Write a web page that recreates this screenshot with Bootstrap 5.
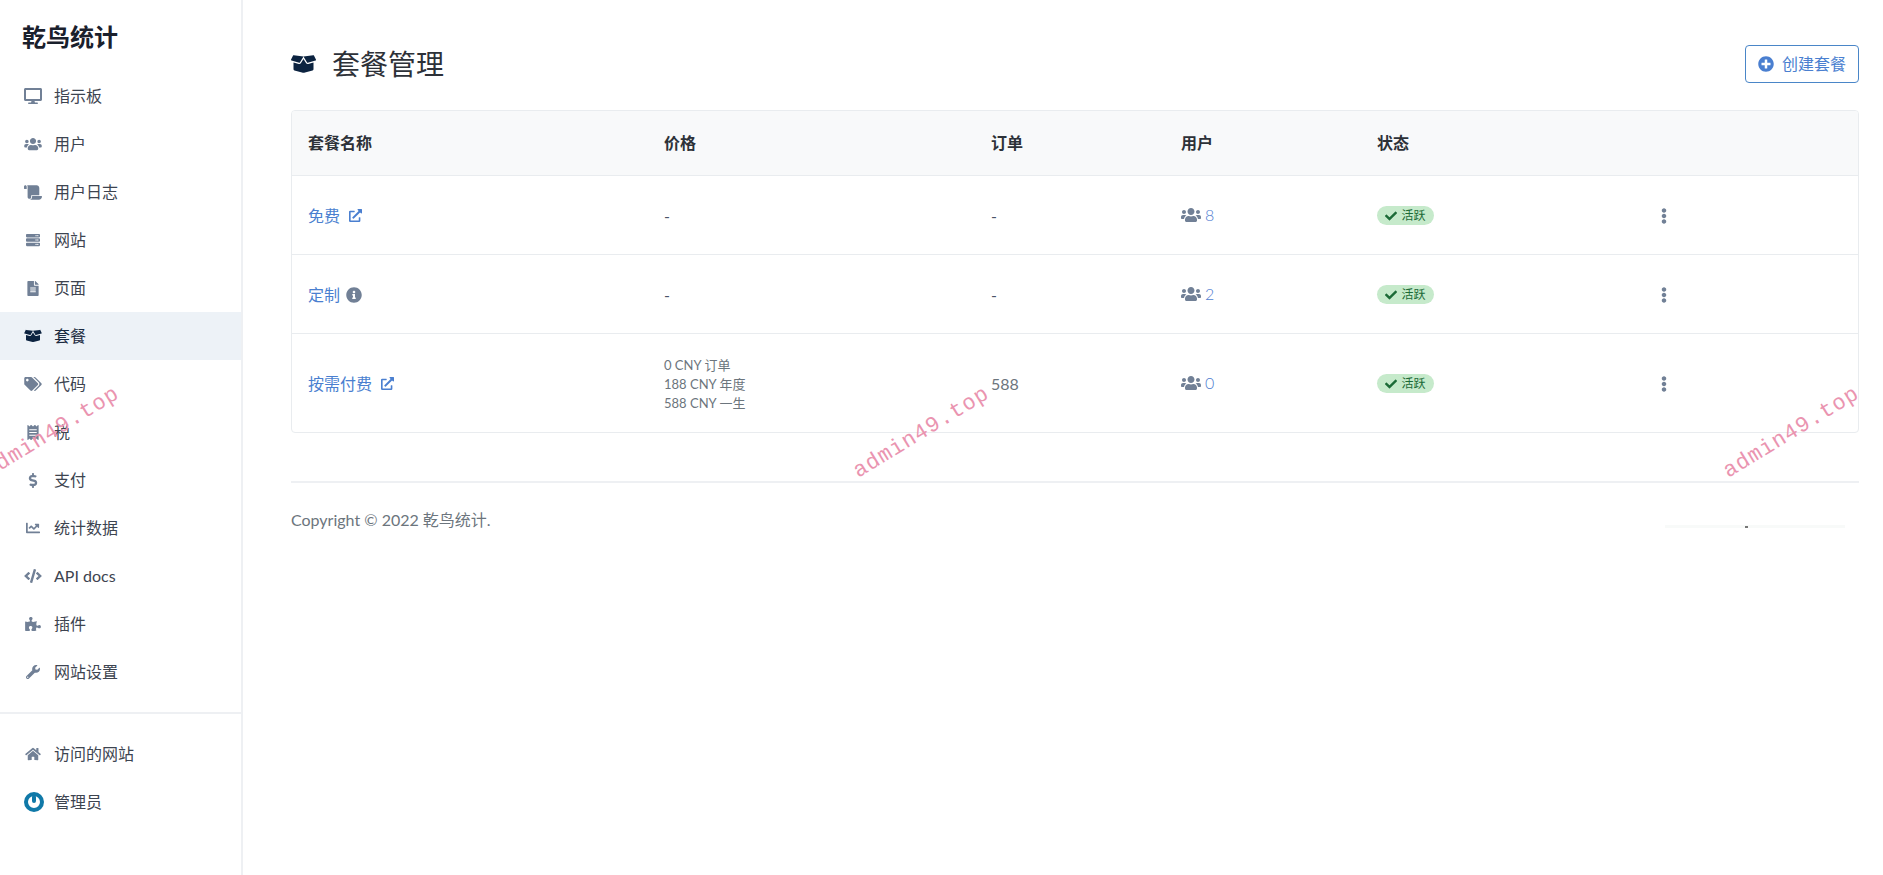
<!DOCTYPE html>
<html lang="zh-CN">
<head>
  <meta charset="UTF-8">
  <meta name="viewport" content="width=device-width, initial-scale=1">
  <title>套餐管理</title>
  <link href="https://cdn.jsdelivr.net/npm/bootstrap@5.3.3/dist/css/bootstrap.min.css" rel="stylesheet">
  <style>
    body {
      font-family: "Lato", "Noto Sans CJK SC", sans-serif;
      font-size: 16px;
      color: #212529;
      background: #fff;
      overflow-x: hidden;
    }
    .ico { fill: currentColor; display: block; flex: none; }
    .side-bar {
      width: 243px;
      flex: none;
      border-right: 2px solid #eef0f3;
    }
    .brand-name {
      height: 72px;
      padding: 19px 22px 0;
      font-size: 24px;
      line-height: 36px;
      font-weight: 700;
      color: #1a202c;
    }
    .side-link {
      height: 48px;
      padding: 0 0 0 24px;
      color: #3d4450;
    }
    .side-link:hover { color: #3d4450; }
    .side-link .ico-box {
      width: 30px;
      flex: none;
      color: #718096;
    }
    .side-link.on { background: #edf2f7; color: #1a2a40; }
    .side-link.on .ico-box { color: #0c2340; }
    .side-line { height: 2px; background: #eef0f3; margin: 16px 0 16px; }
    .avatar-ring {
      width: 20px;
      height: 20px;
      border-radius: 50%;
      border: 4px solid #1079a8;
      position: relative;
    }
    .avatar-ring::after {
      content: "";
      position: absolute;
      left: 4px;
      top: -1px;
      width: 4px;
      height: 8px;
      border-radius: 2px;
      background: #1079a8;
    }
    .main-area { padding: 45px 24px 0 48px; min-width: 0; }
    .page-head { height: 38px; margin-bottom: 27px; }
    .page-title { font-size: 28px; font-weight: 400; margin: 0; color: #2d3138; line-height: 38px; }
    .title-ico { color: #0c2340; }
    .add-btn {
      height: 38px;
      width: 114px;
      padding: 0;
      border-color: #4a86c8;
      color: #4a7fd0;
      background: #fff;
      border-radius: 4px;
    }
    .plan-box {
      border: 1px solid #e9ecef;
      border-radius: 4px;
      overflow: hidden;
    }
    .plan-table { table-layout: fixed; margin: 0; width: 100%; }
    .plan-table th {
      height: 64px;
      vertical-align: middle;
      background: #f8f9fa;
      font-weight: 700;
      color: #2d3138;
      padding: 0 16px;
      border-bottom: 1px solid #e9ecef;
    }
    .plan-table td {
      height: 79px;
      vertical-align: middle;
      padding: 2px 16px 0;
      color: #4a5568;
      border-bottom: 1px solid #e9ecef;
    }
    .plan-table tr:last-child td { height: 99px; border-bottom: 0; }
    .plan-table th:nth-child(1) { width: 356px; }
    .plan-table th:nth-child(2) { width: 327px; }
    .plan-table th:nth-child(3) { width: 190px; }
    .plan-table th:nth-child(4) { width: 196px; }
    .plan-table th:nth-child(5) { width: 284px; }
    .plan-link { color: #4a7fd0; text-decoration: none; }
    .link-gap { gap: 9px; }
    .info-gap { gap: 6px; }
    .price-lines { font-size: 13px; line-height: 19px; color: #6c757d; padding-top: 2px; }
    .plan-table td.order-num { color: #6c757d; }
    .gray-ico { color: #718096; }
    .count-num { color: #4f7dd0; font-weight: 300; }
    .state-pill {
      background: #c6eacb;
      color: #1c6b37;
      font-size: 12px;
      font-weight: 400;
      height: 19px;
      width: 57px;
      padding: 0;
      line-height: 19px;
      margin-top: 2px;
    }
    .dots-ico { color: #718096; }
    .foot-line { height: 2px; background: #eef0f3; margin: 48px 0 25px; }
    .foot-text { color: #6c757d; line-height: 24px; }
    .stamp {
      position: absolute;
      top: 460px;
      font-family: "Liberation Mono", monospace;
      font-size: 22px;
      line-height: 24px;
      letter-spacing: 0.9px;
      color: #ea94b0;
      white-space: nowrap;
      transform-origin: left bottom;
      transform: rotate(-31.5deg);
      pointer-events: none;
    }
    .stamp-a { left: -8px; }
    .stamp-b { left: 862px; }
    .stamp-c { left: 1732px; }
    .scan-bit {
      position: absolute;
      left: 1665px;
      top: 525px;
      width: 180px;
      height: 3px;
      background: #f8faf9;
    }
    .scan-bit::after {
      content: "";
      position: absolute;
      left: 80px;
      top: 1px;
      width: 3px;
      height: 2px;
      background: #777;
    }
  </style>
</head>
<body>

<svg width="0" height="0" class="position-absolute">
  <symbol id="i-desktop" viewBox="0 0 576 512"><path d="M528 0H48C21.5 0 0 21.5 0 48v320c0 26.5 21.5 48 48 48h192l-16 48h-72c-13.3 0-24 10.7-24 24s10.7 24 24 24h272c13.3 0 24-10.7 24-24s-10.7-24-24-24h-72l-16-48h192c26.5 0 48-21.5 48-48V48c0-26.5-21.5-48-48-48zm-16 352H64V64h448v288z"/></symbol>
  <symbol id="i-users" viewBox="0 0 640 512"><path d="M96 224c35.3 0 64-28.7 64-64s-28.7-64-64-64-64 28.7-64 64 28.7 64 64 64zm448 0c35.3 0 64-28.7 64-64s-28.7-64-64-64-64 28.7-64 64 28.7 64 64 64zm32 32h-64c-17.6 0-33.5 7.1-45.1 18.6 40.3 22.1 68.9 62 75.1 109.4h66c17.7 0 32-14.3 32-32v-32c0-35.3-28.7-64-64-64zm-256 0c61.9 0 112-50.1 112-112S381.9 32 320 32 208 82.1 208 144s50.1 112 112 112zm76.8 32h-8.3c-20.8 10-43.9 16-68.5 16s-47.6-6-68.5-16h-8.3C179.6 288 128 339.6 128 403.2V432c0 26.5 21.5 48 48 48h288c26.5 0 48-21.5 48-48v-28.8c0-63.6-51.6-115.2-115.2-115.2zm-223.7-13.4C161.5 263.1 145.6 256 128 256H64c-35.3 0-64 28.7-64 64v32c0 17.7 14.3 32 32 32h65.9c6.3-47.4 34.9-87.3 75.2-109.4z"/></symbol>
  <symbol id="i-scroll" viewBox="0 0 640 512"><path d="M48 0C21.53 0 0 21.53 0 48v64c0 8.84 7.16 16 16 16h80V48C96 21.53 74.47 0 48 0zm208 412.57V352h288V96c0-52.94-43.06-96-96-96H111.59C121.74 13.41 128 29.92 128 48v368c0 38.87 34.66 69.65 74.77 63.12C234.28 474 256 444.46 256 412.57zM288 384v32c0 52.93-43.06 96-96 96h336c61.86 0 112-50.14 112-112 0-8.84-7.16-16-16-16H288z"/></symbol>
  <symbol id="i-server" viewBox="0 0 512 512"><path d="M480 160H32c-17.673 0-32-14.327-32-32V64c0-17.673 14.327-32 32-32h448c17.673 0 32 14.327 32 32v64c0 17.673-14.327 32-32 32zm-48-88c-13.255 0-24 10.745-24 24s10.745 24 24 24 24-10.745 24-24-10.745-24-24-24zm-64 0c-13.255 0-24 10.745-24 24s10.745 24 24 24 24-10.745 24-24-10.745-24-24-24zm112 248H32c-17.673 0-32-14.327-32-32v-64c0-17.673 14.327-32 32-32h448c17.673 0 32 14.327 32 32v64c0 17.673-14.327 32-32 32zm-48-88c-13.255 0-24 10.745-24 24s10.745 24 24 24 24-10.745 24-24-10.745-24-24-24zm-64 0c-13.255 0-24 10.745-24 24s10.745 24 24 24 24-10.745 24-24-10.745-24-24-24zm112 248H32c-17.673 0-32-14.327-32-32v-64c0-17.673 14.327-32 32-32h448c17.673 0 32 14.327 32 32v64c0 17.673-14.327 32-32 32zm-48-88c-13.255 0-24 10.745-24 24s10.745 24 24 24 24-10.745 24-24-10.745-24-24-24zm-64 0c-13.255 0-24 10.745-24 24s10.745 24 24 24 24-10.745 24-24-10.745-24-24-24z"/></symbol>
  <symbol id="i-file" viewBox="0 0 384 512"><path d="M224 136V0H24C10.7 0 0 10.7 0 24v464c0 13.3 10.7 24 24 24h336c13.3 0 24-10.7 24-24V160H248c-13.2 0-24-10.8-24-24zm64 236c0 6.6-5.4 12-12 12H108c-6.6 0-12-5.4-12-12v-8c0-6.6 5.4-12 12-12h168c6.6 0 12 5.4 12 12v8zm0-64c0 6.6-5.4 12-12 12H108c-6.6 0-12-5.4-12-12v-8c0-6.6 5.4-12 12-12h168c6.6 0 12 5.4 12 12v8zm0-72v8c0 6.6-5.4 12-12 12H108c-6.6 0-12-5.4-12-12v-8c0-6.6 5.4-12 12-12h168c6.6 0 12 5.4 12 12zm96-114.1v6.1H256V0h6.1c6.4 0 12.5 2.5 17 7l97.9 98c4.5 4.5 7 10.6 7 16.9z"/></symbol>
  <symbol id="i-box" viewBox="0 0 640 512"><path d="M425.7 256c-16.9 0-32.8-9-41.4-23.4L320 126l-64.2 106.6c-8.7 14.5-24.6 23.5-41.5 23.5-4.5 0-9-.6-13.3-1.9L64 215v178c0 14.7 10 27.5 24.2 31l216.2 54.1c10.2 2.5 20.9 2.5 31 0L551.8 424c14.2-3.6 24.2-16.4 24.2-31V215l-137 39.1c-4.3 1.3-8.8 1.9-13.3 1.9zm212.6-112.2L586.8 41c-3.1-6.2-9.8-9.8-16.7-8.9L320 64l91.7 152.1c3.8 6.3 11.4 9.3 18.5 7.3l197.9-56.5c9.9-2.9 14.7-13.9 10.2-23.1zM53.2 41L1.7 143.8c-4.6 9.2.3 20.2 10.1 23l197.9 56.5c7.1 2 14.7-1 18.5-7.3L320 64 69.8 32.1c-6.9-.8-13.5 2.7-16.6 8.9z"/></symbol>
  <symbol id="i-tags" viewBox="0 0 640 512"><path d="M497.941 225.941L286.059 14.059A48 48 0 0 0 252.118 0H48C21.49 0 0 21.49 0 48v204.118a48 48 0 0 0 14.059 33.941l211.882 211.882c18.744 18.745 49.136 18.746 67.882 0l204.118-204.118c18.745-18.745 18.745-49.137 0-67.882zM112 160c-26.51 0-48-21.49-48-48s21.49-48 48-48 48 21.49 48 48-21.49 48-48 48zm513.941 133.823L421.823 497.941c-18.745 18.745-49.137 18.745-67.882 0l-.36-.36L527.64 323.522c16.999-16.999 26.36-39.6 26.36-63.64s-9.362-46.641-26.36-63.64L331.397 0h48.721a48 48 0 0 1 33.941 14.059l211.882 211.882c18.745 18.745 18.745 49.137 0 67.882z"/></symbol>
  <symbol id="i-receipt" viewBox="0 0 384 512"><path d="M358.4 3.2L320 48 265.6 3.2a15.9 15.9 0 0 0-19.2 0L192 48 137.6 3.2a15.9 15.9 0 0 0-19.2 0L64 48 25.6 3.2C15-4.7 0 2.8 0 16v480c0 13.2 15 20.7 25.6 12.8L64 464l54.4 44.8a15.9 15.9 0 0 0 19.2 0L192 464l54.4 44.8a15.9 15.9 0 0 0 19.2 0L320 464l38.4 44.8c10.5 7.9 25.6.4 25.6-12.8V16c0-13.2-15-20.7-25.6-12.8zM320 360c0 4.4-3.6 8-8 8H72c-4.4 0-8-3.6-8-8v-16c0-4.4 3.6-8 8-8h240c4.4 0 8 3.6 8 8v16zm0-96c0 4.4-3.6 8-8 8H72c-4.4 0-8-3.6-8-8v-16c0-4.4 3.6-8 8-8h240c4.4 0 8 3.6 8 8v16zm0-96c0 4.4-3.6 8-8 8H72c-4.4 0-8-3.6-8-8v-16c0-4.4 3.6-8 8-8h240c4.4 0 8 3.6 8 8v16z"/></symbol>
  <symbol id="i-dollar" viewBox="0 0 288 512"><path d="M209.2 233.4l-108-31.6C88.7 198.2 80 186.5 80 173.5c0-16.3 13.2-29.5 29.5-29.5h66.3c12.2 0 24.2 3.7 34.2 10.5 6.1 4.1 14.3 3.1 19.5-2l34.8-34c7.1-6.9 6.1-18.4-1.8-24.5C238 74.8 207.4 64.1 176 64V16c0-8.8-7.2-16-16-16h-32c-8.8 0-16 7.2-16 16v48h-2.5C45.8 64-5.4 118.7.5 183.6c4.2 46.1 39.4 83.6 83.8 96.6l102.5 30c12.5 3.7 21.2 15.3 21.2 28.3 0 16.3-13.2 29.5-29.5 29.5h-66.3C100 368 88 364.3 78 357.5c-6.1-4.1-14.3-3.1-19.5 2l-34.8 34c-7.1 6.9-6.1 18.4 1.8 24.5 24.5 19.2 55.1 29.9 86.5 30v48c0 8.8 7.2 16 16 16h32c8.8 0 16-7.2 16-16v-48.2c46.6-.9 90.3-28.6 105.7-72.7 21.5-61.6-14.6-124.8-72.5-141.7z"/></symbol>
  <symbol id="i-chart" viewBox="0 0 512 512"><path d="M496 384H64V80c0-8.84-7.16-16-16-16H16C7.16 64 0 71.16 0 80v336c0 17.67 14.33 32 32 32h464c8.84 0 16-7.16 16-16v-32c0-8.84-7.16-16-16-16zM464 96H345.94c-21.38 0-32.09 25.85-16.97 40.97l32.4 32.4L288 242.75l-73.37-73.37c-12.5-12.5-32.76-12.5-45.25 0l-68.69 68.69c-6.25 6.25-6.25 16.38 0 22.63l22.62 22.62c6.25 6.25 16.38 6.25 22.63 0L192 237.25l73.37 73.37c12.5 12.5 32.76 12.5 45.25 0l96-96 32.4 32.4c15.12 15.12 40.97 4.41 40.97-16.97V112c.01-8.84-7.15-16-15.99-16z"/></symbol>
  <symbol id="i-code" viewBox="0 0 640 512"><path d="M278.9 511.5l-61-17.7c-6.4-1.8-10-8.5-8.2-14.9L346.2 8.7c1.8-6.4 8.5-10 14.9-8.2l61 17.7c6.4 1.8 10 8.5 8.2 14.9L293.8 503.3c-1.9 6.4-8.5 10.1-14.9 8.2zm-114-112.2l43.5-46.4c4.6-4.9 4.3-12.7-.8-17.2L117 256l90.6-79.7c5.1-4.5 5.5-12.3.8-17.2l-43.5-46.4c-4.5-4.8-12.1-5.1-17-.5L3.8 247.2c-5.1 4.7-5.1 12.8 0 17.5l144.1 135.1c4.9 4.6 12.5 4.4 17-.5zm327.2.6l144.1-135.1c5.1-4.7 5.1-12.8 0-17.5L492.1 112.1c-4.8-4.5-12.4-4.3-17 .5L431.6 159c-4.6 4.9-4.3 12.7.8 17.2L523 256l-90.6 79.7c-5.1 4.5-5.5 12.3-.8 17.2l43.5 46.4c4.5 4.9 12.1 5.1 17 .6z"/></symbol>
  <symbol id="i-puzzle" viewBox="0 0 576 512"><path d="M519.442 288.651c-41.519 0-59.5 31.593-82.058 31.593C377.409 320.244 432 144 432 144s-196.288 80-196.288-3.297c0-35.827 36.288-46.25 36.288-85.985C272 19.216 243.885 0 210.539 0c-34.654 0-66.366 18.891-66.366 56.346 0 41.364 31.711 59.277 31.711 81.75C175.885 207.719 0 166.758 0 166.758v333.237s178.635 41.047 178.635-28.662c0-22.473-40-40.107-40-81.471 0-37.456 29.25-56.346 63.577-56.346 33.673 0 61.788 19.216 61.788 54.717 0 39.735-36.288 50.158-36.288 85.985 0 60.803 129.675 25.73 181.23 25.73 0 0-34.725-120.101 25.827-120.101 35.962 0 46.423 36.152 86.308 36.152C556.712 416 576 387.99 576 354.443c0-34.199-18.962-65.792-56.558-65.792z"/></symbol>
  <symbol id="i-wrench" viewBox="0 0 512 512"><path d="M507.73 109.1c-2.24-9.03-13.54-12.09-20.12-5.51l-74.36 74.36-67.88-11.31-11.31-67.88 74.36-74.36c6.62-6.62 3.43-17.9-5.66-20.16-47.38-11.74-99.55.91-136.58 37.93-39.64 39.64-50.55 97.1-34.05 147.2L18.74 402.76c-24.99 24.99-24.99 65.51 0 90.5 24.99 24.99 65.51 24.99 90.5 0l213.21-213.21c50.12 16.71 107.47 5.68 147.37-34.22 37.07-37.07 49.7-89.32 37.91-136.73zM64 472c-13.25 0-24-10.75-24-24 0-13.26 10.75-24 24-24s24 10.74 24 24c0 13.25-10.75 24-24 24z"/></symbol>
  <symbol id="i-home" viewBox="0 0 576 512"><path d="M280.37 148.26L96 300.11V464a16 16 0 0 0 16 16l112.06-.29a16 16 0 0 0 15.92-16V368a16 16 0 0 1 16-16h64a16 16 0 0 1 16 16v95.64a16 16 0 0 0 16 16.05L464 480a16 16 0 0 0 16-16V300L295.67 148.26a12.19 12.19 0 0 0-15.3 0zM571.6 251.47L488 182.56V44.05a12 12 0 0 0-12-12h-56a12 12 0 0 0-12 12v72.61L318.47 43a48 48 0 0 0-61 0L4.34 251.47a12 12 0 0 0-1.6 16.9l25.5 31A12 12 0 0 0 45.15 301l235.22-193.74a12.19 12.19 0 0 1 15.3 0L530.9 301a12 12 0 0 0 16.9-1.6l25.5-31a12 12 0 0 0-1.7-16.93z"/></symbol>
  <symbol id="i-link" viewBox="0 0 512 512"><path d="M432,320H400a16,16,0,0,0-16,16V448H64V128H208a16,16,0,0,0,16-16V80a16,16,0,0,0-16-16H48A48,48,0,0,0,0,112V464a48,48,0,0,0,48,48H400a48,48,0,0,0,48-48V336A16,16,0,0,0,432,320ZM488,0h-128c-21.37,0-32.05,25.91-16.97,41l35.73,35.73L135,320.37a24,24,0,0,0,0,34L157.67,377a24,24,0,0,0,34,0L435.28,133.32,471,169c15,15,41,4.5,41-17V24A24,24,0,0,0,488,0Z"/></symbol>
  <symbol id="i-info" viewBox="0 0 512 512"><path d="M256 8C119.043 8 8 119.083 8 256c0 136.997 111.043 248 248 248s248-111.003 248-248C504 119.083 392.957 8 256 8zm0 110c23.196 0 42 18.804 42 42s-18.804 42-42 42-42-18.804-42-42 18.804-42 42-42zm56 254c0 6.627-5.373 12-12 12h-88c-6.627 0-12-5.373-12-12v-24c0-6.627 5.373-12 12-12h12v-64h-12c-6.627 0-12-5.373-12-12v-24c0-6.627 5.373-12 12-12h64c6.627 0 12 5.373 12 12v100h12c6.627 0 12 5.373 12 12v24z"/></symbol>
  <symbol id="i-plus" viewBox="0 0 512 512"><path d="M256 8C119 8 8 119 8 256s111 248 248 248 248-111 248-248S393 8 256 8zm144 276c0 6.6-5.4 12-12 12h-92v92c0 6.6-5.4 12-12 12h-56c-6.6 0-12-5.4-12-12v-92h-92c-6.6 0-12-5.4-12-12v-56c0-6.6 5.4-12 12-12h92v-92c0-6.6 5.4-12 12-12h56c6.6 0 12 5.4 12 12v92h92c6.6 0 12 5.4 12 12v56z"/></symbol>
  <symbol id="i-check" viewBox="0 0 512 512"><path d="M173.898 439.404l-166.4-166.4c-9.997-9.997-9.997-26.206 0-36.204l36.203-36.204c9.997-9.998 26.207-9.998 36.204 0L192 312.69 432.095 72.596c9.997-9.997 26.207-9.997 36.204 0l36.203 36.204c9.997 9.997 9.997 26.206 0 36.204l-294.4 294.401c-9.998 9.997-26.207 9.997-36.204-.001z"/></symbol>
  <symbol id="i-dots" viewBox="0 0 192 512"><path d="M96 184c39.8 0 72 32.2 72 72s-32.2 72-72 72-72-32.2-72-72 32.2-72 72-72zM24 80c0 39.8 32.2 72 72 72s72-32.2 72-72S135.8 8 96 8 24 40.2 24 80zm0 352c0 39.8 32.2 72 72 72s72-32.2 72-72-32.2-72-72-72-72 32.2-72 72z"/></symbol>
</svg>

<div class="d-flex min-vh-100">
  <!-- sidebar -->
  <aside class="side-bar">
    <div class="brand-name">乾鸟统计</div>
    <nav class="nav flex-column">
      <a class="nav-link side-link d-flex align-items-center" href="#"><span class="ico-box"><svg class="ico" width="18" height="16"><use href="#i-desktop"/></svg></span>指示板</a>
      <a class="nav-link side-link d-flex align-items-center" href="#"><span class="ico-box"><svg class="ico" width="18" height="14"><use href="#i-users"/></svg></span>用户</a>
      <a class="nav-link side-link d-flex align-items-center" href="#"><span class="ico-box"><svg class="ico" width="18" height="15"><use href="#i-scroll"/></svg></span>用户日志</a>
      <a class="nav-link side-link d-flex align-items-center" href="#"><span class="ico-box"><svg class="ico" width="18" height="14"><use href="#i-server"/></svg></span>网站</a>
      <a class="nav-link side-link d-flex align-items-center" href="#"><span class="ico-box"><svg class="ico" width="18" height="15"><use href="#i-file"/></svg></span>页面</a>
      <a class="nav-link side-link on d-flex align-items-center" href="#"><span class="ico-box"><svg class="ico" width="18" height="14"><use href="#i-box"/></svg></span>套餐</a>
      <a class="nav-link side-link d-flex align-items-center" href="#"><span class="ico-box"><svg class="ico" width="18" height="14"><use href="#i-tags"/></svg></span>代码</a>
      <a class="nav-link side-link d-flex align-items-center" href="#"><span class="ico-box"><svg class="ico" width="18" height="15"><use href="#i-receipt"/></svg></span>税</a>
      <a class="nav-link side-link d-flex align-items-center" href="#"><span class="ico-box"><svg class="ico" width="18" height="15"><use href="#i-dollar"/></svg></span>支付</a>
      <a class="nav-link side-link d-flex align-items-center" href="#"><span class="ico-box"><svg class="ico" width="18" height="14"><use href="#i-chart"/></svg></span>统计数据</a>
      <a class="nav-link side-link d-flex align-items-center" href="#"><span class="ico-box"><svg class="ico" width="18" height="14"><use href="#i-code"/></svg></span>API docs</a>
      <a class="nav-link side-link d-flex align-items-center" href="#"><span class="ico-box"><svg class="ico" width="18" height="14"><use href="#i-puzzle"/></svg></span>插件</a>
      <a class="nav-link side-link d-flex align-items-center" href="#"><span class="ico-box"><svg class="ico" width="18" height="14"><use href="#i-wrench"/></svg></span>网站设置</a>
    </nav>
    <div class="side-line"></div>
    <nav class="nav flex-column">
      <a class="nav-link side-link d-flex align-items-center" href="#"><span class="ico-box"><svg class="ico" width="18" height="14"><use href="#i-home"/></svg></span>访问的网站</a>
      <a class="nav-link side-link d-flex align-items-center" href="#"><span class="ico-box"><span class="avatar-ring d-block"></span></span>管理员</a>
    </nav>
  </aside>

  <!-- content -->
  <main class="main-area flex-grow-1">
    <div class="page-head d-flex justify-content-between align-items-center">
      <div class="d-flex align-items-center gap-3">
        <svg class="ico title-ico" width="25" height="20"><use href="#i-box"/></svg>
        <h1 class="page-title">套餐管理</h1>
      </div>
      <button type="button" class="btn add-btn d-flex align-items-center justify-content-center gap-2"><svg class="ico" width="16" height="16"><use href="#i-plus"/></svg>创建套餐</button>
    </div>

    <div class="plan-box">
      <table class="table plan-table">
        <thead>
          <tr><th>套餐名称</th><th>价格</th><th>订单</th><th>用户</th><th>状态</th><th></th></tr>
        </thead>
        <tbody>
          <tr>
            <td><a class="plan-link d-inline-flex align-items-center link-gap" href="#">免费 <svg class="ico" width="13" height="13"><use href="#i-link"/></svg></a></td>
            <td>-</td>
            <td>-</td>
            <td><span class="d-inline-flex align-items-center gap-1"><svg class="ico gray-ico" width="20" height="16"><use href="#i-users"/></svg><span class="count-num">8</span></span></td>
            <td><span class="badge rounded-pill state-pill d-inline-flex align-items-center justify-content-center gap-1"><svg class="ico" width="12" height="12"><use href="#i-check"/></svg>活跃</span></td>
            <td><svg class="ico dots-ico" width="6" height="16"><use href="#i-dots"/></svg></td>
          </tr>
          <tr>
            <td><span class="d-inline-flex align-items-center info-gap"><a class="plan-link" href="#">定制</a><svg class="ico gray-ico" width="16" height="16"><use href="#i-info"/></svg></span></td>
            <td>-</td>
            <td>-</td>
            <td><span class="d-inline-flex align-items-center gap-1"><svg class="ico gray-ico" width="20" height="16"><use href="#i-users"/></svg><span class="count-num">2</span></span></td>
            <td><span class="badge rounded-pill state-pill d-inline-flex align-items-center justify-content-center gap-1"><svg class="ico" width="12" height="12"><use href="#i-check"/></svg>活跃</span></td>
            <td><svg class="ico dots-ico" width="6" height="16"><use href="#i-dots"/></svg></td>
          </tr>
          <tr>
            <td><a class="plan-link d-inline-flex align-items-center link-gap" href="#">按需付费 <svg class="ico" width="13" height="13"><use href="#i-link"/></svg></a></td>
            <td><div class="price-lines">0 CNY 订单<br>188 CNY 年度<br>588 CNY 一生</div></td>
            <td class="order-num">588</td>
            <td><span class="d-inline-flex align-items-center gap-1"><svg class="ico gray-ico" width="20" height="16"><use href="#i-users"/></svg><span class="count-num">0</span></span></td>
            <td><span class="badge rounded-pill state-pill d-inline-flex align-items-center justify-content-center gap-1"><svg class="ico" width="12" height="12"><use href="#i-check"/></svg>活跃</span></td>
            <td><svg class="ico dots-ico" width="6" height="16"><use href="#i-dots"/></svg></td>
          </tr>
        </tbody>
      </table>
    </div>

    <div class="foot-line"></div>
    <div class="foot-text">Copyright © 2022 乾鸟统计.</div>
  </main>
</div>

<!-- watermark over the page -->
<div class="stamp stamp-a">admin49.top</div>
<div class="stamp stamp-b">admin49.top</div>
<div class="stamp stamp-c">admin49.top</div>
<div class="scan-bit"></div>

<script src="https://cdn.jsdelivr.net/npm/bootstrap@5.3.3/dist/js/bootstrap.bundle.min.js"></script>
</body>
</html>
